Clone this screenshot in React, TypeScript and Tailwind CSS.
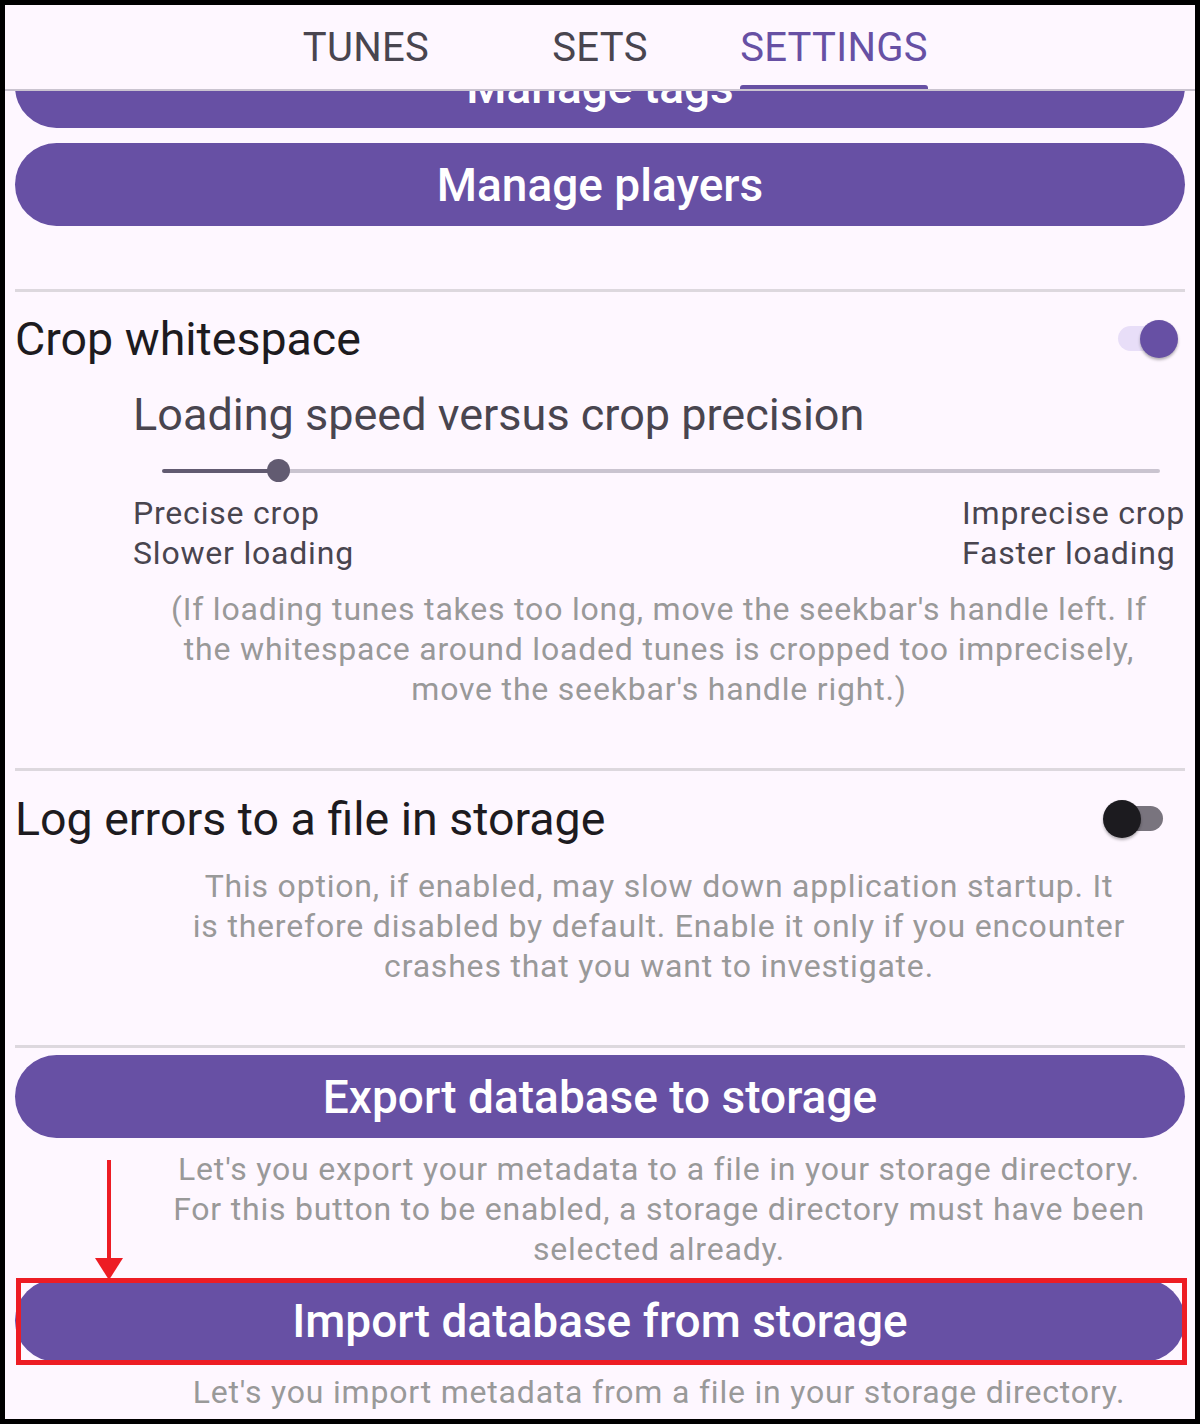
import React from 'react';

function Toggle({ on }: { on: boolean }) {
  return (
    <div className="relative w-[75px] h-[38px] mr-[7px] shrink-0">
      <div
        className={
          on
            ? 'absolute left-[15px] top-[6px] w-[45px] h-[25px] rounded-full bg-[#E8DEF8]'
            : 'absolute left-[15px] top-[6px] w-[45px] h-[25px] rounded-full bg-[#79747E]'
        }
      />
      <div
        className={
          on
            ? 'absolute left-[37px] top-0 w-[38px] h-[38px] rounded-full bg-[#6750A4] shadow-[0_2px_3px_rgba(0,0,0,0.3)]'
            : 'absolute left-0 top-0 w-[38px] h-[38px] rounded-full bg-[#1C1B1F] shadow-[0_2px_3px_rgba(0,0,0,0.3)]'
        }
      />
    </div>
  );
}

function PillButton({ label, className = '' }: { label: string; className?: string }) {
  return (
    <button
      className={
        'w-full h-[83px] rounded-full bg-[#6750A4] text-white text-[46px] font-medium leading-[52px] flex items-center justify-center ' +
        className
      }
    >
      {label}
    </button>
  );
}

function Note({ lines, className = '' }: { lines: string[]; className?: string }) {
  return (
    <p className={'ml-[118px] text-center text-[32px] leading-[40px] tracking-[0.8px] text-[#999999] ' + className}>
      {lines.map((l, i) => (
        <React.Fragment key={i}>
          {l}
          {i < lines.length - 1 && <br />}
        </React.Fragment>
      ))}
    </p>
  );
}

export default function App() {
  const tabs = ['TUNES', 'SETS', 'SETTINGS'];

  return (
    <div className="w-[1200px] h-[1424px] bg-black p-[5px]">
      <div className="relative w-[1190px] h-[1414px] overflow-hidden bg-[#FEF7FF] flex flex-col font-['Roboto','Noto_Sans',sans-serif]">
        {/* tab bar */}
        <header className="h-[86px] shrink-0 pt-[19px] border-b-2 border-[#CAC4D0] flex justify-center bg-[#FEF7FF]">
          {tabs.map((t) => (
            <div key={t} className="w-[234px] flex justify-center">
              <div className="flex flex-col h-full">
                <span
                  className={
                    t === 'SETTINGS'
                      ? 'text-[40px] leading-[48px] tracking-[0.3px] text-[#6750A4]'
                      : 'text-[40px] leading-[48px] tracking-[0.3px] text-[#49454F]'
                  }
                >
                  {t}
                </span>
                {t === 'SETTINGS' && <div className="mt-auto h-[4px] rounded-t-[3px] bg-[#6750A4]" />}
              </div>
            </div>
          ))}
        </header>

        {/* scrolled settings list */}
        <main className="flex-1 min-h-0 overflow-hidden px-[10px]">
          <PillButton label="Manage tags" className="-mt-[46px]" />
          <PillButton label="Manage players" className="mt-[15px]" />

          <div className="mt-[63px] h-[3px] bg-[#DDD8DE]" />
          <div className="mt-[21px] h-[52px] flex items-center justify-between">
            <span className="text-[46.5px] leading-[52px] text-[#1D1B20]">Crop whitespace</span>
            <Toggle on />
          </div>

          <div className="ml-[118px] mt-[24px] text-[45px] leading-[52px] text-[#49454F]">
            Loading speed versus crop precision
          </div>
          <div className="ml-[147px] mr-[25px] mt-[10px] h-[40px] relative flex items-center">
            <div className="h-[4px] w-[117px] bg-[#625B71] rounded-l-full" />
            <div className="h-[4px] flex-1 bg-[#CAC4D0] rounded-r-full" />
            <div className="absolute left-[105px] top-[8px] w-[23px] h-[23px] rounded-full bg-[#625B71]" />
          </div>
          <div className="ml-[118px] mt-[2px] flex justify-between text-[32px] leading-[40px] tracking-[0.8px] text-[#49454F]">
            <div>
              Precise crop
              <br />
              Slower loading
            </div>
            <div>
              Imprecise crop
              <br />
              Faster loading
            </div>
          </div>
          <Note
            className="mt-[16px]"
            lines={[
              "(If loading tunes takes too long, move the seekbar's handle left. If",
              'the whitespace around loaded tunes is cropped too imprecisely,',
              "move the seekbar's handle right.)",
            ]}
          />

          <div className="mt-[59px] h-[3px] bg-[#DDD8DE]" />
          <div className="mt-[22px] h-[52px] flex items-center justify-between">
            <span className="text-[46.5px] leading-[52px] text-[#1D1B20]">Log errors to a file in storage</span>
            <Toggle on={false} />
          </div>
          <Note
            className="mt-[21px]"
            lines={[
              'This option, if enabled, may slow down application startup. It',
              'is therefore disabled by default. Enable it only if you encounter',
              'crashes that you want to investigate.',
            ]}
          />

          <div className="mt-[59px] h-[3px] bg-[#DDD8DE]" />
          <PillButton label="Export database to storage" className="mt-[7px]" />
          <Note
            className="mt-[11px]"
            lines={[
              "Let's you export your metadata to a file in your storage directory.",
              'For this button to be enabled, a storage directory must have been',
              'selected already.',
            ]}
          />
          <PillButton label="Import database from storage" className="mt-[10px]" />
          <Note
            className="mt-[10px]"
            lines={[
              "Let's you import metadata from a file in your storage directory.",
              'Only works if a storage directory has been selected already.',
            ]}
          />
        </main>

        {/* red annotation overlay */}
        <svg className="absolute left-[88px] top-[1153px]" width="32" height="122" viewBox="0 0 32 122">
          <line x1="16" y1="2" x2="16" y2="102" stroke="#ED1C24" strokeWidth="4" />
          <polygon points="2,100 30,100 16,122" fill="#ED1C24" />
        </svg>
        <div className="absolute left-[11px] top-[1273px] w-[1171px] h-[87px] border-[5px] border-[#ED1C24]" />
      </div>
    </div>
  );
}
